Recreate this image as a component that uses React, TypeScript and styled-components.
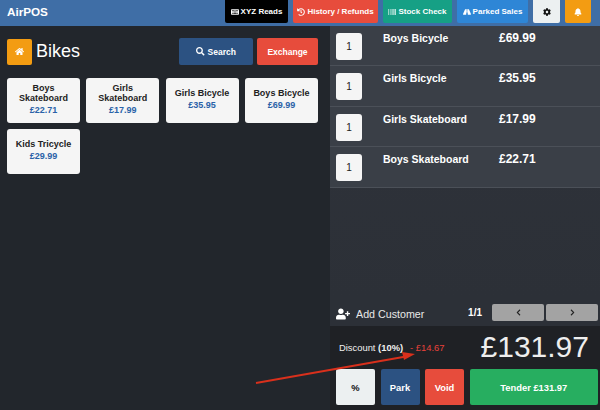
import styled, { createGlobalStyle } from 'styled-components';
import {
  FaBarcode,
  FaBell,
  FaChevronLeft,
  FaChevronRight,
  FaCog,
  FaHistory,
  FaHome,
  FaKeyboard,
  FaRoad,
  FaSearch,
  FaUserPlus,
} from 'react-icons/fa';

const GlobalStyle = createGlobalStyle`
  html, body { margin: 0; padding: 0; background: #22262c; }
  body { font-family: "Liberation Sans", Arial, sans-serif; }
`;

const products = [
  { name: 'Boys Skateboard', price: '£22.71' },
  { name: 'Girls Skateboard', price: '£17.99' },
  { name: 'Girls Bicycle', price: '£35.95' },
  { name: 'Boys Bicycle', price: '£69.99' },
  { name: 'Kids Tricycle', price: '£29.99' },
];

const lines = [
  { name: 'Boys Bicycle', price: '£69.99' },
  { name: 'Girls Bicycle', price: '£35.95' },
  { name: 'Girls Skateboard', price: '£17.99' },
  { name: 'Boys Skateboard', price: '£22.71' },
];

const Page = styled.div`
  position: relative;
  width: 600px;
  height: 410px;
  overflow: hidden;
  display: flex;
  flex-direction: column;
  background: #22262c;
`;

const Navbar = styled.header`
  height: 26px;
  flex: none;
  display: flex;
  align-items: flex-start;
  justify-content: space-between;
  padding: 0 9px 0 7px;
  box-sizing: border-box;
  background: #3f6ea6;
`;

const Brand = styled.div`
  color: #fff;
  font-size: 11.7px;
  font-weight: 700;
  line-height: 23px;
`;

const NavButtons = styled.nav`
  display: flex;
  gap: 5px;
`;

const NavButton = styled.div<{ $bg: string; $color?: string; $w: number }>`
  width: ${(p) => p.$w}px;
  height: 23px;
  display: flex;
  align-items: center;
  justify-content: center;
  gap: 2px;
  border-radius: 0 0 2px 2px;
  background: ${(p) => p.$bg};
  color: ${(p) => p.$color || '#fff'};
  font-size: 8px;
  font-weight: 700;
  white-space: nowrap;
  svg { font-size: 8px; }
`;

const Main = styled.div`
  flex: 1;
  display: flex;
  min-height: 0;
`;

const Left = styled.section`
  width: 330px;
  flex: none;
  padding: 12px 12px 0 7px;
  box-sizing: border-box;
`;

const TitleRow = styled.div`
  display: flex;
  align-items: center;
  height: 27px;
`;

const HomeButton = styled.div`
  width: 25px;
  height: 26px;
  display: flex;
  align-items: center;
  justify-content: center;
  background: #f39c12;
  border-radius: 2px;
  color: #fff;
  font-size: 9px;
`;

const Title = styled.h1`
  margin: 0 0 0 4px;
  flex: 1;
  color: #fff;
  font-size: 18px;
  font-weight: 400;
`;

const ActionButton = styled.div<{ $bg: string; $w: number }>`
  width: ${(p) => p.$w}px;
  height: 27px;
  margin-left: 4px;
  display: flex;
  align-items: center;
  justify-content: center;
  gap: 3px;
  border-radius: 2px;
  background: ${(p) => p.$bg};
  color: #fff;
  font-size: 8.5px;
  font-weight: 700;
`;

const ProductGrid = styled.div`
  display: grid;
  grid-template-columns: repeat(4, 73px);
  grid-auto-rows: 45px;
  column-gap: 6.3px;
  row-gap: 6px;
  margin-top: 12.5px;
`;

const ProductCard = styled.div`
  display: flex;
  flex-direction: column;
  align-items: center;
  justify-content: center;
  padding: 0 6px;
  box-sizing: border-box;
  background: #f5f5f5;
  border-radius: 3px;
  text-align: center;
  color: #222;
  font-size: 9px;
  font-weight: 700;
  line-height: 9.5px;
`;

const ProductPrice = styled.div`
  margin-top: 1px;
  color: #2a62a8;
  font-size: 9px;
  line-height: 12px;
`;

const Right = styled.section`
  flex: 1;
  display: flex;
  flex-direction: column;
  min-width: 0;
`;

const OrderList = styled.div`
  flex: 1;
  background: linear-gradient(#2f333b, #2c3037);
`;

const OrderRow = styled.div`
  height: 40.4px;
  box-sizing: border-box;
  display: flex;
  align-items: flex-start;
  padding: 7px 0 0 6px;
  background: #3a3f47;
  border-bottom: 1px solid #4b5058;
`;

const QtyBox = styled.div`
  width: 26px;
  height: 27px;
  display: flex;
  align-items: center;
  justify-content: center;
  background: #f5f5f5;
  border-radius: 3px;
  color: #222;
  font-size: 10px;
`;

const LineName = styled.div`
  width: 116px;
  margin-left: 21px;
  margin-top: -1px;
  color: #fff;
  font-size: 10.5px;
  font-weight: 700;
  line-height: 12px;
`;

const LinePrice = styled.div`
  margin-top: -2px;
  color: #fff;
  font-size: 12px;
  font-weight: 700;
  line-height: 14px;
`;

const CustomerBar = styled.div`
  height: 27px;
  flex: none;
  display: flex;
  align-items: center;
  padding: 0 2px 0 6px;
  background: #2c3037;
  color: #e8e8e8;
  font-size: 10.7px;
`;

const AddCustomer = styled.div`
  display: flex;
  align-items: center;
  gap: 6px;
  flex: 1;
  padding-top: 3px;
  svg { font-size: 14px; color: #fff; }
`;

const PageCount = styled.div`
  margin-right: 8px;
  color: #fff;
  font-size: 10px;
  font-weight: 700;
`;

const PagerButton = styled.div`
  width: 52px;
  height: 17px;
  margin-left: 2px;
  display: flex;
  align-items: center;
  justify-content: center;
  background: #a3a3a3;
  border-radius: 2px;
  color: #222;
  font-size: 7px;
`;

const Totals = styled.div`
  height: 84px;
  flex: none;
  padding: 0 2px 0 6px;
  box-sizing: border-box;
  background: #1f2125;
`;

const TotalRow = styled.div`
  height: 43px;
  display: flex;
  align-items: center;
  padding-left: 3px;
`;

const DiscountLabel = styled.div`
  color: #f0f0f0;
  font-size: 9.4px;
  white-space: pre;
  b { font-weight: 700; }
`;

const DiscountValue = styled.span`
  margin-left: 7px;
  color: #e8423a;
  font-size: 9.4px;
`;

const GrandTotal = styled.div`
  margin-left: auto;
  margin-right: 9px;
  margin-top: -2px;
  color: #eee;
  font-size: 30px;
  line-height: 36px;
`;

const PayRow = styled.div`
  display: flex;
  gap: 5.5px;
`;

const PayButton = styled.div<{ $bg: string; $color?: string; $w?: number }>`
  ${(p) => (p.$w ? `width: ${p.$w}px;` : 'flex: 1;')}
  height: 36px;
  display: flex;
  align-items: center;
  justify-content: center;
  border-radius: 2px;
  background: ${(p) => p.$bg};
  color: ${(p) => p.$color || '#fff'};
  font-size: 9.4px;
  font-weight: 700;
`;

const Arrow = styled.svg`
  position: absolute;
  left: 0;
  top: 0;
  pointer-events: none;
`;

export default function App() {
  return (
    <Page>
      <GlobalStyle />
      <Navbar>
        <Brand>AirPOS</Brand>
        <NavButtons>
          <NavButton $bg='#000' $w={63}>
            <FaKeyboard /> XYZ Reads
          </NavButton>
          <NavButton $bg='#e74c3c' $w={85}>
            <FaHistory /> History / Refunds
          </NavButton>
          <NavButton $bg='#16a085' $w={69}>
            <FaBarcode /> Stock Check
          </NavButton>
          <NavButton $bg='#2e86d6' $w={71}>
            <FaRoad /> Parked Sales
          </NavButton>
          <NavButton $bg='#ecf0f1' $color='#111' $w={27}>
            <FaCog />
          </NavButton>
          <NavButton $bg='#f39c12' $w={26}>
            <FaBell />
          </NavButton>
        </NavButtons>
      </Navbar>
      <Main>
        <Left>
          <TitleRow>
            <HomeButton>
              <FaHome />
            </HomeButton>
            <Title>Bikes</Title>
            <ActionButton $bg='#2c5282' $w={74}>
              <FaSearch /> Search
            </ActionButton>
            <ActionButton $bg='#e74c3c' $w={61}>
              Exchange
            </ActionButton>
          </TitleRow>
          <ProductGrid>
            {products.map((p) => (
              <ProductCard key={p.name}>
                {p.name}
                <ProductPrice>{p.price}</ProductPrice>
              </ProductCard>
            ))}
          </ProductGrid>
        </Left>
        <Right>
          <OrderList>
            {lines.map((l) => (
              <OrderRow key={l.name}>
                <QtyBox>1</QtyBox>
                <LineName>{l.name}</LineName>
                <LinePrice>{l.price}</LinePrice>
              </OrderRow>
            ))}
          </OrderList>
          <CustomerBar>
            <AddCustomer>
              <FaUserPlus /> Add Customer
            </AddCustomer>
            <PageCount>1/1</PageCount>
            <PagerButton>
              <FaChevronLeft />
            </PagerButton>
            <PagerButton>
              <FaChevronRight />
            </PagerButton>
          </CustomerBar>
          <Totals>
            <TotalRow>
              <DiscountLabel>
                Discount <b>(10%)</b>
              </DiscountLabel>
              <DiscountValue>- £14.67</DiscountValue>
              <GrandTotal>£131.97</GrandTotal>
            </TotalRow>
            <PayRow>
              <PayButton $bg='#ecf0f1' $color='#111' $w={39}>
                %
              </PayButton>
              <PayButton $bg='#2c5282' $w={39}>
                Park
              </PayButton>
              <PayButton $bg='#e74c3c' $w={39}>
                Void
              </PayButton>
              <PayButton $bg='#27ae60'>Tender £131.97</PayButton>
            </PayRow>
          </Totals>
        </Right>
      </Main>
      <Arrow width='600' height='410' viewBox='0 0 600 410'>
        <path d='M256 383 L406 356.5' stroke='#d9301c' strokeWidth='1.8' fill='none' />
        <path d='M415 354 L402 352 L404 360 Z' fill='#d9301c' />
      </Arrow>
    </Page>
  );
}
